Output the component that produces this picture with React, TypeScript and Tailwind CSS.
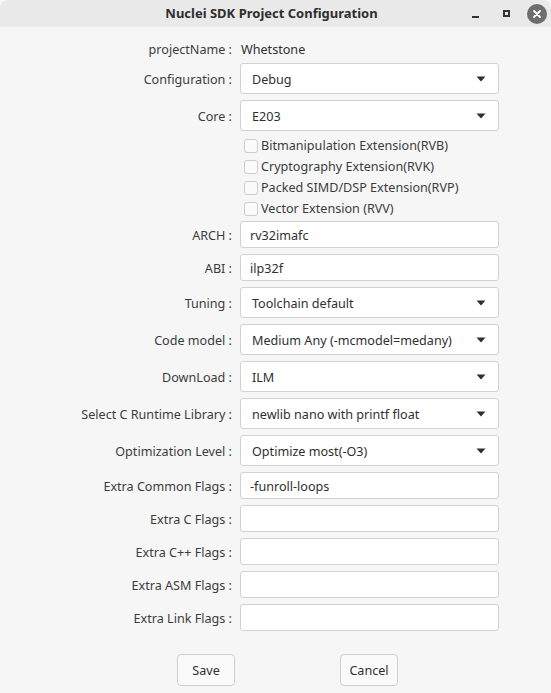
import React from "react";

const font = { fontFamily: '"Noto Sans", "DejaVu Sans", sans-serif' };

function Arrow() {
  return (
    <svg width="10" height="6" viewBox="0 0 10 6" className="shrink-0">
      <path d="M0.5 0.5 L9.5 0.5 L5 5.5 Z" fill="#2f2f2f" />
    </svg>
  );
}

function Label({ children }: { children: React.ReactNode }) {
  return (
    <div className="w-[233px] shrink-0 pr-[1px] pt-[3px] text-right text-[12.6px] text-[#3c3c3c] whitespace-nowrap">
      {children}
    </div>
  );
}

function ComboRow({ label, value, mt }: { label: string; value: string; mt: string }) {
  return (
    <div className={`flex items-center ${mt}`}>
      <Label>{label} :</Label>
      <div className="ml-[7px] flex h-[31px] w-[259px] items-center justify-between rounded-[3px] border border-[#d2d2d2] bg-white pl-[11px] pr-[12px] text-[12.6px] text-[#2f2f2f]">
        <span className="pt-[3px]">{value}</span>
        <Arrow />
      </div>
    </div>
  );
}

function InputRow({ label, value, mt }: { label: string; value?: string; mt: string }) {
  return (
    <div className={`flex items-center ${mt}`}>
      <Label>{label} :</Label>
      <div className="ml-[7px] flex h-[27px] w-[259px] items-center rounded-[3px] border border-[#d2d2d2] bg-white pl-[9px] pt-[3px] text-[12.6px] text-[#2f2f2f]">
        {value ?? ""}
      </div>
    </div>
  );
}

function Check({ label }: { label: string }) {
  return (
    <div className="flex h-[21px] items-center">
      <div className="ml-[244px] h-[14px] w-[14px] rounded-[3px] border border-[#cdcdcd] bg-[#fbfbfb]" />
      <span className="ml-[3px] pt-[2px] text-[12.6px] text-[#3c3c3c]">{label}</span>
    </div>
  );
}

export default function App() {
  return (
    <div style={font} className="relative h-[693px] w-[551px] overflow-hidden bg-[#f6f6f6]">
      {/* title bar */}
      <div className="relative flex h-[27px] items-center justify-center rounded-t-[8px] bg-[#e9e9e9] pr-[8px]">
        <span className="text-[13px] font-bold text-[#2e2e2e]">Nuclei SDK Project Configuration</span>
        <div className="absolute right-[4px] top-0 flex h-[27px] items-center">
          <div className="mt-[7px] h-[2px] w-[7px] bg-[#333]" />
          <div className="ml-[24px] h-[7px] w-[7px] border-[2px] border-[#333]" />
          <div className="ml-[17px] flex h-[20px] w-[20px] items-center justify-center rounded-full bg-[#6e6e6e]">
            <svg width="8" height="8" viewBox="0 0 8 8">
              <path d="M1 1 L7 7 M7 1 L1 7" stroke="#fff" strokeWidth="1.8" strokeLinecap="round" />
            </svg>
          </div>
        </div>
      </div>

      <div className="flex flex-col">
        <div className="mt-[12px] flex h-[20px] items-center">
          <Label>projectName :</Label>
          <span className="ml-[8px] pt-[3px] text-[12.6px] text-[#2f2f2f]">Whetstone</span>
        </div>
        <ComboRow label="Configuration" value="Debug" mt="mt-[4px]" />
        <ComboRow label="Core" value="E203" mt="mt-[6px]" />
        <div className="mt-[4px] flex flex-col">
          <Check label="Bitmanipulation Extension(RVB)" />
          <Check label="Cryptography Extension(RVK)" />
          <Check label="Packed SIMD/DSP Extension(RVP)" />
          <Check label="Vector Extension (RVV)" />
        </div>
        <InputRow label="ARCH" value="rv32imafc" mt="mt-[2px]" />
        <InputRow label="ABI" value="ilp32f" mt="mt-[6px]" />
        <ComboRow label="Tuning" value="Toolchain default" mt="mt-[6px]" />
        <ComboRow label="Code model" value="Medium Any (-mcmodel=medany)" mt="mt-[6px]" />
        <ComboRow label="DownLoad" value="ILM" mt="mt-[6px]" />
        <ComboRow label="Select C Runtime Library" value="newlib nano with printf float" mt="mt-[6px]" />
        <ComboRow label="Optimization Level" value="Optimize most(-O3)" mt="mt-[6px]" />
        <InputRow label="Extra Common Flags" value="-funroll-loops" mt="mt-[6px]" />
        <InputRow label="Extra C Flags" mt="mt-[6px]" />
        <InputRow label="Extra C++ Flags" mt="mt-[6px]" />
        <InputRow label="Extra ASM Flags" mt="mt-[6px]" />
        <InputRow label="Extra Link Flags" mt="mt-[6px]" />
        <div className="mt-[23px] flex pl-[177px]">
          <button className="h-[32px] w-[58px] rounded-[4px] border border-[#cfcfcf] bg-[#fafafa] pt-[2px] text-[12.6px] text-[#2f2f2f]">Save</button>
          <button className="ml-[105px] h-[32px] w-[58px] rounded-[4px] border border-[#cfcfcf] bg-[#fafafa] pt-[2px] text-[12.6px] text-[#2f2f2f]">Cancel</button>
        </div>
      </div>
    </div>
  );
}
